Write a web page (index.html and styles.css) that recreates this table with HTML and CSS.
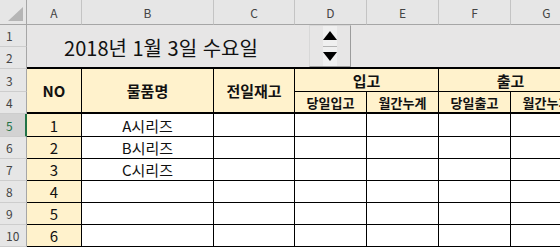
FILE: index.html
```html
<!DOCTYPE html>
<html lang="ko">
<head>
    <meta charset="UTF-8">
    <meta name="viewport" content="width=device-width, initial-scale=1.0">
    <title>입출고 현황</title>
    <link rel="stylesheet" href="styles.css">
</head>
<body>
    <div class="sheet">
        <!-- column headings -->
        <div class="corner">
            <svg width="15" height="14" viewBox="0 0 15 14"><polygon points="15,0 15,14 0,14" fill="#b5b5b5"/></svg>
        </div>
        <div class="col-head">A</div>
        <div class="col-head">B</div>
        <div class="col-head">C</div>
        <div class="col-head">D</div>
        <div class="col-head">E</div>
        <div class="col-head">F</div>
        <div class="col-head">G</div>

        <!-- row headings -->
        <div class="row-head" style="grid-row: 2">1</div>
        <div class="row-head" style="grid-row: 3">2</div>
        <div class="row-head" style="grid-row: 4">3</div>
        <div class="row-head" style="grid-row: 5">4</div>
        <div class="row-head active" style="grid-row: 6">5</div>
        <div class="row-head" style="grid-row: 7">6</div>
        <div class="row-head" style="grid-row: 8">7</div>
        <div class="row-head" style="grid-row: 9">8</div>
        <div class="row-head" style="grid-row: 10">9</div>
        <div class="row-head" style="grid-row: 11">10</div>

        <!-- date banner -->
        <div class="banner title">2018년 1월 3일 수요일</div>
        <div class="banner rest"></div>

        <!-- table head -->
        <div class="th tall c-a">NO</div>
        <div class="th tall c-b">물품명</div>
        <div class="th tall c-c">전일재고</div>
        <div class="th group c-de">입고</div>
        <div class="th group c-fg">출고</div>
        <div class="th sub">당일입고</div>
        <div class="th sub">월간누계</div>
        <div class="th sub">당일출고</div>
        <div class="th sub">월간누계</div>

        <!-- rows -->
        <div class="td no">1</div><div class="td">A시리즈</div><div class="td"></div><div class="td"></div><div class="td"></div><div class="td"></div><div class="td"></div>
        <div class="td no">2</div><div class="td">B시리즈</div><div class="td"></div><div class="td"></div><div class="td"></div><div class="td"></div><div class="td"></div>
        <div class="td no">3</div><div class="td">C시리즈</div><div class="td"></div><div class="td"></div><div class="td"></div><div class="td"></div><div class="td"></div>
        <div class="td no">4</div><div class="td"></div><div class="td"></div><div class="td"></div><div class="td"></div><div class="td"></div><div class="td"></div>
        <div class="td no">5</div><div class="td"></div><div class="td"></div><div class="td"></div><div class="td"></div><div class="td"></div><div class="td"></div>
        <div class="td no">6</div><div class="td"></div><div class="td"></div><div class="td"></div><div class="td"></div><div class="td"></div><div class="td"></div>

        <!-- date spin button -->
        <div class="spin">
            <button class="spin-btn" type="button">
                <svg width="14" height="9" viewBox="0 0 14 9"><polygon points="7,0 14,9 0,9" fill="#000"/></svg>
            </button>
            <button class="spin-btn" type="button">
                <svg width="14" height="9" viewBox="0 0 14 9"><polygon points="0,0 14,0 7,9" fill="#000"/></svg>
            </button>
        </div>
    </div>
</body>
</html>
```

FILE: styles.css
```css
body {
    margin: 0;
    width: 560px;
    height: 247px;
    overflow: hidden;
    background: #fff;
    font-family: "Noto Sans CJK KR", "Noto Sans", sans-serif;
}
.sheet {
    position: relative;
    display: grid;
    grid-template-columns: 27px 55px 132px 81px 72px 72px 72px 72px;
    grid-template-rows: 25px 22px 22px 23px 22px 23px 22px 22px 22px 22px 22px;
}
.sheet > div {
    box-sizing: border-box;
    display: flex;
    align-items: center;
    justify-content: center;
}
.corner {
    background: #e6e6e6;
    border-right: 1px solid #a6a6a6;
    border-bottom: 1px solid #a6a6a6;
    align-items: flex-end !important;
    justify-content: flex-end !important;
    padding: 0 3px 3px 0;
}
.col-head {
    background: #e6e6e6;
    border-right: 1px solid #c4c4c4;
    border-bottom: 1px solid #a6a6a6;
    color: #444;
    font-size: 12px;
    padding-top: 1px;
}
.row-head {
    grid-column: 1;
    background: #e6e6e6;
    border-right: 1px solid #a6a6a6;
    border-bottom: 1px solid #cdcdcd;
    color: #444;
    font-size: 12px;
    justify-content: flex-start !important;
    padding-left: 6px;
}
.row-head.active {
    background: #d2d2d2;
    color: #217346;
    border-right: 2px solid #217346;
}
.banner {
    grid-row: 2 / 4;
    background: #e7e6e6;
    border-bottom: 2px solid #000;
}
.title {
    grid-column: 2 / 5;
    font-size: 20px;
    color: #111;
    padding-top: 2px;
}
.rest {
    grid-column: 5 / 9;
}
.th {
    background: #fff2cc;
    border-right: 1px solid #000;
    color: #111;
    font-weight: 700;
    font-size: 15px;
}
.tall {
    grid-row: 4 / 6;
    border-bottom: 2px solid #000;
}
.c-a { grid-column: 2; }
.c-b { grid-column: 3; }
.c-c { grid-column: 4; }
.group {
    grid-row: 4;
    border-bottom: 1px solid #000;
}
.c-de { grid-column: 5 / 7; }
.c-fg { grid-column: 7 / 9; }
.sub {
    grid-row: 5;
    font-size: 13px;
    border-bottom: 2px solid #000;
}
.td {
    background: #fff;
    border-right: 1px solid #000;
    border-bottom: 1px solid #000;
    font-size: 15px;
    color: #111;
}
.td.no {
    grid-column: 2;
    background: #fff2cc;
}
.spin {
    position: absolute;
    left: 309px;
    top: 25px;
    width: 42px;
    height: 42px;
    display: flex;
    flex-direction: column;
    box-sizing: border-box;
    border: 1px solid;
    border-color: #d8d8d8 #9c9c9c #9c9c9c #d8d8d8;
}
.spin-btn {
    flex: 1;
    margin: 0;
    padding: 0;
    border: none;
    background: #f0f0f0;
    display: flex;
    align-items: center;
    justify-content: center;
}
.spin-btn + .spin-btn {
    border-top: 1px solid #b4b4b4;
}
```
